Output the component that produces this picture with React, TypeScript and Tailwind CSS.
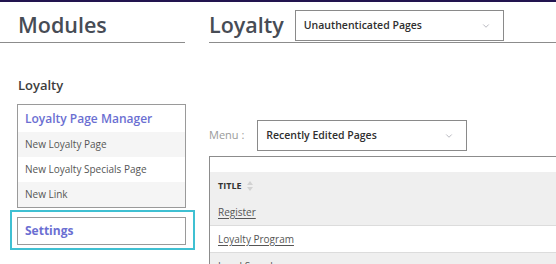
import React from 'react';
import { ChevronDown } from 'lucide-react';

const font = { fontFamily: '"Open Sans", "Noto Sans", Arial, sans-serif' };

const sideLinks = [
  { label: 'New Loyalty Page', shaded: true },
  { label: 'New Loyalty Specials Page', shaded: false },
  { label: 'New Link', shaded: true },
];

const rows = [
  { title: 'Register', shaded: true },
  { title: 'Loyalty Program', shaded: false },
  { title: 'Local Search', shaded: true },
];

function Select({ label, width }: { label: string; width: string }) {
  return (
    <div
      className={`${width} h-[31px] border border-[#8a8a8a] bg-white flex items-center justify-between pl-[8px] pr-[12px]`}
    >
      <span className="text-[10.5px] font-semibold text-[#2f2f2f]">{label}</span>
      <ChevronDown className="w-[10px] h-[10px] text-[#8f8f9a]" strokeWidth={1.5} />
    </div>
  );
}

export default function App() {
  return (
    <div
      className="w-[556px] h-[264px] overflow-hidden bg-white border-t-2 border-[#22144f] flex"
      style={font}
    >
      {/* Sidebar */}
      <div className="w-[185px] shrink-0">
        <div className="h-[41px] border-b border-[#8c8c8c] pt-[8px] pl-[18px]">
          <div className="h-[31px] flex items-center text-[21.5px] font-semibold text-[#474c55]">
            Modules
          </div>
        </div>

        <div className="pl-[18px] pt-[33px] h-[61px] text-[13px] font-semibold text-[#3d3d3d]">
          Loyalty
        </div>

        <div className="ml-[17px] w-[169px] border border-[#9a9a9a]">
          <div className="h-[27px] flex items-center pl-[7px] text-[12px] font-semibold text-[#6b6fd2]">
            Loyalty Page Manager
          </div>
          {sideLinks.map((l) => (
            <div
              key={l.label}
              className={`h-[25px] flex items-center pl-[7px] text-[10px] text-[#555] ${
                l.shaded ? 'bg-[#f5f5f5]' : 'bg-white'
              }`}
            >
              {l.label}
            </div>
          ))}
        </div>

        <div className="mt-[2px] ml-[10px] w-[185px] h-[40px] border-2 border-[#3fc0d2] pt-[5px] pl-[5px]">
          <div className="w-[169px] h-[28px] border border-[#9a9a9a] flex items-center pl-[7px] text-[12px] font-bold text-[#6b6fd2]">
            Settings
          </div>
        </div>
      </div>

      {/* Main */}
      <div className="ml-[24px] w-[420px] shrink-0">
        <div className="h-[41px] border-b border-[#8c8c8c] pt-[8px]">
          <div className="h-[31px] flex items-center gap-[11px]">
            <span className="text-[21.5px] font-semibold text-[#474c55]">Loyalty</span>
            <Select label="Unauthenticated Pages" width="w-[209px]" />
          </div>
        </div>

        <div className="mt-[77px] h-[31px] flex items-center gap-[13px]">
          <span className="text-[11px] text-[#9a9a9a]">Menu :</span>
          <Select label="Recently Edited Pages" width="w-[210px]" />
        </div>

        <div className="mt-[5px] border-l border-t border-[#8c8c8c] pt-[15px]">
          <div className="h-[27px] bg-[#efefef] flex items-center pl-[8px] gap-[5px]">
            <span className="text-[9px] font-bold text-[#333]">TITLE</span>
            <svg width="6" height="10" viewBox="0 0 6 10" className="text-[#d2d2d2]">
              <path d="M3 0 L6 4 L0 4 Z" fill="currentColor" />
              <path d="M3 10 L6 6 L0 6 Z" fill="currentColor" />
            </svg>
          </div>
          {rows.map((r) => (
            <div
              key={r.title}
              className={`h-[27px] flex items-center pl-[8px] border-b border-[#dcdcdc] ${
                r.shaded ? 'bg-[#efefef]' : 'bg-white'
              }`}
            >
              <a className="text-[10px] text-[#555] underline underline-offset-2">{r.title}</a>
            </div>
          ))}
        </div>
      </div>
    </div>
  );
}
